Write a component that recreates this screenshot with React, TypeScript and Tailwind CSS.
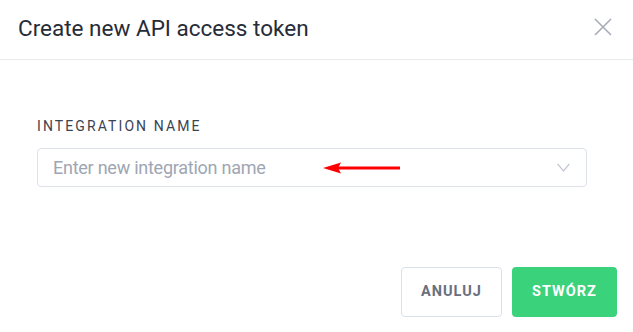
const font = { fontFamily: "Roboto, 'Liberation Sans', sans-serif" };

export default function App() {
  return (
    <div className="w-[633px] h-[332px] bg-white text-[#2d3440]" style={font}>
      {/* Header */}
      <div className="h-[60px] flex items-center justify-between pl-[18px] pr-[21px] border-b border-[#e8eaee]">
        <h2 className="text-[22.5px] leading-none text-[#262c37] -mt-[2px]">
          Create new API access token
        </h2>
        <button className="-mt-[5px]">
          <svg width="18" height="18" viewBox="0 0 18 18">
            <path d="M1 1 L17 17 M17 1 L1 17" stroke="#a3aab6" strokeWidth="1.5" fill="none" />
          </svg>
        </button>
      </div>

      {/* Body */}
      <div className="pl-[37px] pr-[46px] pt-[59px]">
        <label className="block text-[14px] leading-none tracking-[2.1px] text-[#3c4350] uppercase">
          Integration name
        </label>
        <div className="mt-[15px] h-[39px] flex items-center justify-between border border-[#dde2ea] rounded-[4px] pl-[15px] pr-[16px]">
          <div className="flex items-center">
            <span className="text-[18px] text-[#9ea6b3] tracking-[-0.25px]">
              Enter new integration name
            </span>
            <svg width="78" height="14" viewBox="0 0 78 14" className="ml-[57px]">
              <line x1="14" y1="7" x2="77" y2="7" stroke="#ff0000" strokeWidth="3" />
              <polygon points="0,7 18,1.5 15,7 18,12.5" fill="#ff0000" />
            </svg>
          </div>
          <svg width="13" height="9" viewBox="0 0 13 9">
            <path d="M0.7 1 L6.5 8 L12.3 1" stroke="#c3c9d3" strokeWidth="1.2" fill="none" />
          </svg>
        </div>
      </div>

      {/* Footer */}
      <div className="flex justify-end gap-[10px] pr-[16px] pt-[80px]">
        <button className="w-[101px] h-[50px] border border-[#dbe1ea] rounded-[4px] text-[14.5px] font-bold tracking-[1px] text-[#687080]">
          ANULUJ
        </button>
        <button className="w-[105px] h-[50px] rounded-[4px] bg-[#3bd27c] text-white text-[14.5px] font-bold tracking-[1px]">
          STWÓRZ
        </button>
      </div>
    </div>
  );
}
